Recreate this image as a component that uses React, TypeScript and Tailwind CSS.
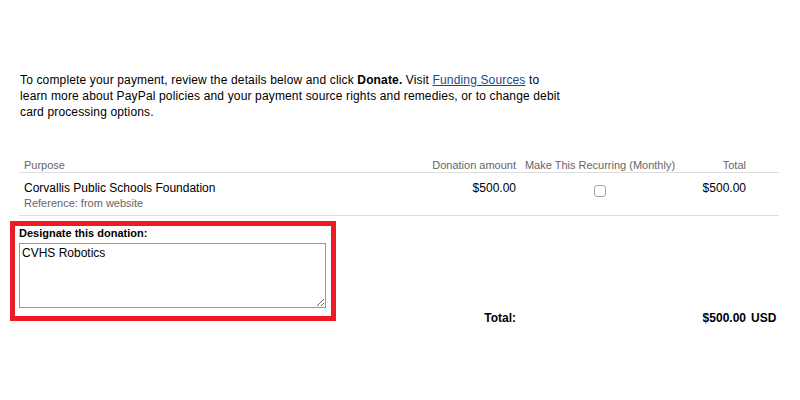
import React from "react";

const cols = "grid grid-cols-[401px_100px_160px_66px_33px]";

const App: React.FC = () => {
  return (
    <div className="w-[800px] h-[400px] bg-white text-black font-['Liberation_Sans',Arial,sans-serif]">
      <div className="pt-[72px] pl-[20px]">
        <p className="text-[12px] leading-[16px] tracking-[0.15px] w-[570px]">
          To complete your payment, review the details below and click <b>Donate.</b> Visit{" "}
          <a href="#" className="text-[#1a4b86] underline">Funding Sources</a> to
          <br />
          learn more about PayPal policies and your payment source rights and remedies, or to change debit
          <br />
          card processing options.
        </p>
      </div>

      <div className="ml-[19px] mt-[39px] w-[760px]">
        <div className={`${cols} text-[11px] leading-[13px] text-[#666] border-b border-[#ddd]`}>
          <div className="pl-[5px]">Purpose</div>
          <div className="text-right pr-[4px]">Donation amount</div>
          <div className="text-center">Make This Recurring (Monthly)</div>
          <div className="text-right">Total</div>
          <div />
        </div>
        <div className={`${cols} border-b border-[#ddd] pt-[7px] pb-[5px]`}>
          <div className="pl-[5px]">
            <div className="text-[12px] leading-[16px]">Corvallis Public Schools Foundation</div>
            <div className="text-[11px] leading-[14px] text-[#666]">Reference: from website</div>
          </div>
          <div className="text-right pr-[4px] text-[12px] leading-[16px]">$500.00</div>
          <div className="flex justify-center pt-[5px]">
            <span className="block w-[12px] h-[12px] rounded-[3px] border border-[#a8a8a8] bg-white" />
          </div>
          <div className="text-right text-[12px] leading-[16px]">$500.00</div>
          <div />
        </div>
      </div>

      <div className="flex items-end mt-[5px]">
        <div className="ml-[10px] w-[326px] h-[100px] border-[5px] border-[#ed1c24] px-[4px]">
          <label className="block text-[11px] leading-[14px] font-bold">Designate this donation:</label>
          <textarea
            defaultValue="CVHS Robotics"
            className="block mt-[3px] w-[307px] h-[65px] border border-[#7f9db9] px-[2px] py-[1px] text-[12px] leading-[16px] outline-none resize-y"
          />
        </div>
        <div className="grid grid-cols-[100px_160px_66px_33px] ml-[84px] mb-[-5px] text-[12px] leading-[16px] font-bold">
          <div className="text-right pr-[4px]">Total:</div>
          <div />
          <div className="text-right">$500.00</div>
          <div className="pl-[5px]">USD</div>
        </div>
      </div>
    </div>
  );
};

export default App;
